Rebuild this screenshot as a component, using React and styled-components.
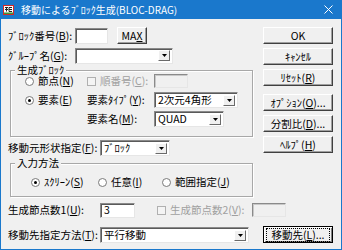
import styled, { createGlobalStyle } from 'styled-components';

const GlobalStyle = createGlobalStyle`
  html, body {
    margin: 0;
    padding: 0;
    background: #f0f0f0;
  }
  body {
    font-family: "Noto Sans CJK JP", "Noto Sans", sans-serif;
  }
`;

const px = v => (typeof v === 'number' ? `${v}px` : v);

const Window = styled.div`
  width: 342px;
  height: 250px;
  box-sizing: border-box;
  display: flex;
  flex-direction: column;
  background: #f0f0f0;
  border: 1px solid #1a78cc;
  border-top: 0;
  font-size: 10.5px;
  line-height: 12px;
  color: #000;
  overflow: hidden;
`;

const TitleBar = styled.div`
  height: 19px;
  flex: none;
  margin: 0 -1px;
  padding: 0 9px 0 3px;
  background: #1a78cc;
  color: #fff;
  font-size: 10px;
  display: flex;
  align-items: center;
  white-space: nowrap;
`;

const TitleIcon = styled.svg`
  flex: none;
  margin-right: 7px;
`;

const CloseIcon = styled.svg`
  flex: none;
  margin-left: auto;
`;

const Body = styled.div`
  flex: 1;
  display: flex;
  padding: 8px 8px 6px 7px;
`;

const LeftCol = styled.div`
  width: 248px;
  display: flex;
  flex-direction: column;
`;

const RightCol = styled.div`
  width: 70px;
  margin-left: auto;
  display: flex;
  flex-direction: column;
`;

const Row = styled.div`
  display: flex;
  align-items: center;
  height: ${p => p.$h || 16}px;
  margin-top: ${p => p.$mt || 0}px;
  white-space: nowrap;
`;

const Label = styled.span`
  flex: none;
  width: ${p => (p.$w ? `${p.$w}px` : 'auto')};
  color: ${p => (p.$disabled ? '#a0a0a0' : '#000')};
`;

const Field = styled.div`
  flex: none;
  box-sizing: border-box;
  width: ${p => p.$w}px;
  height: ${p => p.$h || 16}px;
  margin-left: ${p => p.$ml || 0}px;
  background: ${p => (p.$disabled ? '#f0f0f0' : '#fff')};
  border: 1px solid;
  border-color: #8a8a8a #e6e6e6 #e6e6e6 #8a8a8a;
  box-shadow: inset 1px 1px 0 ${p => (p.$disabled ? '#c8c8c8' : '#5a5a5a')};
  padding-left: 3px;
  display: flex;
  align-items: center;
`;

const Combo = styled(Field)`
  padding-right: 2px;
`;

const ComboText = styled.span`
  flex: 1;
  min-width: 0;
`;

const ArrowBox = styled.span`
  flex: none;
  box-sizing: border-box;
  width: 12px;
  height: 11px;
  background: #f0f0f0;
  border: 1px solid;
  border-color: #fff #6a6a6a #6a6a6a #fff;
  display: flex;
  align-items: center;
  justify-content: center;
`;

const Button = styled.div`
  box-sizing: border-box;
  flex: none;
  width: ${p => p.$w || 70}px;
  height: 17px;
  margin-top: ${p => px(p.$mt || 0)};
  margin-left: ${p => p.$ml || 0}px;
  background: #f0f0f0;
  border: 1px solid;
  border-color: ${p => (p.$focused ? '#000' : '#fff #404040 #404040 #fff')};
  box-shadow: ${p =>
    p.$focused
      ? 'inset 1px 1px 0 #fff, inset -1px -1px 0 #808080'
      : 'inset -1px -1px 0 #a0a0a0'};
  display: flex;
  align-items: center;
  justify-content: center;
  white-space: nowrap;
`;

const FocusRing = styled.span`
  border: 1px dotted #000;
  padding: 0 4px;
`;

const Group = styled.div`
  margin: ${p => p.$mt}px 3px 0 2px;
  border: 1px solid #a8a8a8;
  box-shadow: inset 1px 1px 0 #fff, 1px 1px 0 #fff;
  padding-bottom: ${p => p.$pb}px;
`;

const Legend = styled.div`
  width: fit-content;
  height: 10px;
  line-height: 10px;
  margin: -6px 0 -2px 4px;
  padding: 0 2px;
  background: #f0f0f0;
`;

const BlockGrid = styled.div`
  margin-left: 14px;
  display: grid;
  grid-template-columns: 62px 67px auto;
  grid-auto-rows: 16px;
  row-gap: 3px;
  align-items: center;
  white-space: nowrap;
`;

const Cell = styled.div`
  display: flex;
  align-items: center;
`;

const RadioRow = styled.div`
  display: flex;
  align-items: center;
  height: 16px;
  margin: 8px 0 0 20px;
  white-space: nowrap;
`;

const Choice = styled.label`
  display: flex;
  align-items: center;
  width: ${p => (p.$w ? `${p.$w}px` : 'auto')};
  color: ${p => (p.$disabled ? '#a0a0a0' : '#000')};
`;

const RadioMark = styled.span`
  flex: none;
  box-sizing: border-box;
  width: 9px;
  height: 9px;
  margin-right: 4px;
  border-radius: 50%;
  border: 1px solid #7a7a7a;
  background: #fff;
  display: flex;
  align-items: center;
  justify-content: center;

  &::after {
    content: '';
    width: 3px;
    height: 3px;
    border-radius: 50%;
    background: ${p => (p.$on ? '#000' : 'transparent')};
  }
`;

const CheckMark = styled.span`
  flex: none;
  box-sizing: border-box;
  width: 9px;
  height: 9px;
  margin-right: 4px;
  margin-left: ${p => p.$ml || 0}px;
  border: 1px solid #b0b0b0;
  background: #f4f4f4;
`;

const Arrow = () => (
  <ArrowBox>
    <svg width="5" height="3" viewBox="0 0 5 3">
      <path d="M0 0h5L2.5 3z" fill="#000" />
    </svg>
  </ArrowBox>
);

const Radio = ({ on, w, children }) => (
  <Choice $w={w}>
    <RadioMark $on={on} />
    {children}
  </Choice>
);

const App = () => {
  return (
    <>
      <GlobalStyle />
      <Window>
        <TitleBar>
          <TitleIcon width="11" height="10" viewBox="0 0 11 10">
            <rect x="0.5" y="0.5" width="10" height="9" fill="#fff" stroke="#d42a2a" />
            <rect x="1" y="7.5" width="9" height="1.5" fill="#3a9a3a" />
            <path d="M2 2.5h3M2 4.5h3M3.5 2.5v4M6 2.5h3M6 4.5h3M6 2.5v4h3" stroke="#222" strokeWidth="1" fill="none" />
          </TitleIcon>
          移動によるﾌﾞﾛｯｸ生成(BLOC-DRAG)
          <CloseIcon width="9" height="9" viewBox="0 0 9 9">
            <path d="M0.5 0.5l8 8M8.5 0.5l-8 8" stroke="#fff" strokeWidth="1" />
          </CloseIcon>
        </TitleBar>

        <Body>
          <LeftCol>
            <Row $h={17}>
              <Label $w={67}>ﾌﾞﾛｯｸ番号(<u>B</u>):</Label>
              <Field $w={33} />
              <Button $w={30} $ml={9}>MA<u>X</u></Button>
            </Row>
            <Row $h={17} $mt={3}>
              <Label $w={67}>ｸﾞﾙｰﾌﾟ名(<u>G</u>):</Label>
              <Combo $w={98}>
                <ComboText />
                <Arrow />
              </Combo>
            </Row>

            <Group $mt={6} $pb={9}>
              <Legend>生成ﾌﾞﾛｯｸ</Legend>
              <BlockGrid>
                <Radio>節点(<u>N</u>)</Radio>
                <Choice $disabled>
                  <CheckMark />
                  順番号(<u>C</u>):
                </Choice>
                <Cell>
                  <Field $w={34} $h={14} $disabled />
                </Cell>

                <Radio on>要素(<u>E</u>)</Radio>
                <Label>要素ﾀｲﾌﾟ(<u>Y</u>):</Label>
                <Cell>
                  <Combo $w={84}>
                    <ComboText>2次元4角形</ComboText>
                    <Arrow />
                  </Combo>
                </Cell>

                <span />
                <Label>要素名(<u>M</u>):</Label>
                <Cell>
                  <Combo $w={70}>
                    <ComboText>QUAD</ComboText>
                    <Arrow />
                  </Combo>
                </Cell>
              </BlockGrid>
            </Group>

            <Row $mt={3}>
              <Label $w={92}>移動元形状指定(<u>F</u>):</Label>
              <Combo $w={70}>
                <ComboText>ﾌﾞﾛｯｸ</ComboText>
                <Arrow />
              </Combo>
            </Row>

            <Group $mt={7} $pb={6}>
              <Legend>入力方法</Legend>
              <RadioRow>
                <Radio on w={67}>ｽｸﾘｰﾝ(<u>S</u>)</Radio>
                <Radio w={64}>任意(<u>I</u>)</Radio>
                <Radio>範囲指定(<u>J</u>)</Radio>
              </RadioRow>
            </Group>

            <Row $mt={5}>
              <Label $w={92}>生成節点数1(<u>U</u>):</Label>
              <Field $w={35} $h={15}>3</Field>
              <CheckMark $ml={22} />
              <Label $disabled>生成節点数2(<u>V</u>):</Label>
              <Field $w={34} $h={14} $ml={8} $disabled />
            </Row>

            <Row $mt={9}>
              <Label $w={92}>移動先指定方法(<u>T</u>):</Label>
              <Combo $w={149}>
                <ComboText>平行移動</ComboText>
                <Arrow />
              </Combo>
            </Row>
          </LeftCol>

          <RightCol>
            <Button>OK</Button>
            <Button $mt={4}>ｷｬﾝｾﾙ</Button>
            <Button $mt={4}>ﾘｾｯﾄ(<u>R</u>)</Button>
            <Button $mt={8}>ｵﾌﾟｼｮﾝ(<u>O</u>)...</Button>
            <Button $mt={4}>分割比(<u>D</u>)...</Button>
            <Button $mt={4}>ﾍﾙﾌﾟ(<u>H</u>)</Button>
            <Button $mt="auto" $focused>
              <FocusRing>移動先(<u>L</u>)...</FocusRing>
            </Button>
          </RightCol>
        </Body>
      </Window>
    </>
  );
};

export default App;
